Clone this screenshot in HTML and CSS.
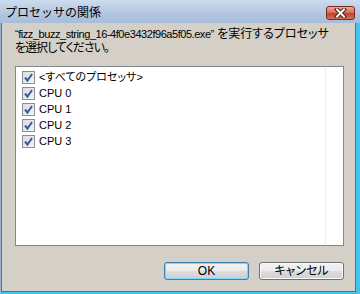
FILE: index.html
```html
<!DOCTYPE html>
<html lang="ja">
<head>
<meta charset="utf-8">
<link rel="stylesheet" href="styles.css">
</head>
<body>
<div class="window">
  <div class="titlebar">
    <span class="title">プロセッサの関係</span>
    <span class="close"><svg width="15" height="10" viewBox="0 0 15 10"><path d="M4 1.5 L11 8.5 M11 1.5 L4 8.5" stroke="#4a1d14" stroke-width="4" stroke-linecap="square"/><path d="M4 1.5 L11 8.5 M11 1.5 L4 8.5" stroke="#fff" stroke-width="2" stroke-linecap="square"/></svg></span>
  </div>
  <div class="body">
    <p class="msg"><span class="fname">“fizz_buzz_string_16-4f0e3432f96a5f05.exe”</span> を実行するプロセッサ<br><span class="tight">を選択してください。</span></p>
    <div class="list">
      <div class="col">
        <div class="item"><span class="cb"><svg width="11" height="11" viewBox="0 0 11 11"><path d="M2 5.5 L4.5 8.5 L9 2" fill="none" stroke="#3d54a0" stroke-width="2"/></svg></span><span>&lt;すべてのプロセッサ&gt;</span></div>
        <div class="item"><span class="cb"><svg width="11" height="11" viewBox="0 0 11 11"><path d="M2 5.5 L4.5 8.5 L9 2" fill="none" stroke="#3d54a0" stroke-width="2"/></svg></span><span>CPU 0</span></div>
        <div class="item"><span class="cb"><svg width="11" height="11" viewBox="0 0 11 11"><path d="M2 5.5 L4.5 8.5 L9 2" fill="none" stroke="#3d54a0" stroke-width="2"/></svg></span><span>CPU 1</span></div>
        <div class="item"><span class="cb"><svg width="11" height="11" viewBox="0 0 11 11"><path d="M2 5.5 L4.5 8.5 L9 2" fill="none" stroke="#3d54a0" stroke-width="2"/></svg></span><span>CPU 2</span></div>
        <div class="item"><span class="cb"><svg width="11" height="11" viewBox="0 0 11 11"><path d="M2 5.5 L4.5 8.5 L9 2" fill="none" stroke="#3d54a0" stroke-width="2"/></svg></span><span>CPU 3</span></div>
      </div>
    </div>
    <div class="buttons">
      <button class="btn default">OK</button>
      <button class="btn">キャンセル</button>
    </div>
  </div>
</div>
</body>
</html>
```

FILE: styles.css
```css
html, body {
  margin: 0;
  padding: 0;
}
body {
  width: 360px;
  height: 294px;
  overflow: hidden;
  font-family: "Liberation Sans", "Noto Sans CJK JP", sans-serif;
  font-size: 12px;
  color: #000;
  background: #d4d0c8;
}
.window {
  box-sizing: border-box;
  width: 360px;
  height: 294px;
  display: flex;
  flex-direction: column;
  border-left: 1px solid #9ab4d2;
  border-right: 4px solid #3ec6ee;
  border-bottom: 2px solid #3ec6ee;
  box-shadow: inset 1px 0 0 #5d6d83, inset -1px 0 0 #5d6d83, inset 0 -1px 0 #5d6d83;
  background: #d4d0c8;
}
.titlebar {
  height: 23px;
  flex: none;
  display: flex;
  align-items: center;
  justify-content: space-between;
  background: linear-gradient(#cddcef, #b2c6e0 60%, #a7bdda);
  padding: 0 5px 0 5px;
  margin-left: -1px;
  margin-right: -4px;
}
.title {
  font-family: "Noto Sans CJK JP", sans-serif;
  font-size: 12px;
  line-height: 14px;
  padding-top: 1px;
}
.close {
  width: 27px;
  height: 12px;
  border: 1px solid #7b2a1c;
  border-radius: 3px;
  background: linear-gradient(#eaa99d, #d8705d 45%, #c2432c 55%, #d3735d);
  display: flex;
  align-items: center;
  justify-content: center;
  margin-top: 2px;
}
.close svg { display: block; }
.body {
  flex: 1;
  display: flex;
  flex-direction: column;
  padding: 4px 12px 0 14px;
}
.msg {
  margin: 0;
  line-height: 14px;
  white-space: nowrap;
  font-feature-settings: "palt";
}
.fname {
  font-size: 11px;
  letter-spacing: -0.45px;
}
.tight {
  letter-spacing: -1px;
}
.list {
  margin-top: 11px;
  height: 178px;
  background: #fff;
  border: 1px solid #828790;
  display: flex;
}
.col {
  width: 303px;
  padding: 2px 0 0 6px;
  border-right: 1px solid #eaeef5;
}
.item {
  height: 16px;
  display: flex;
  align-items: center;
  gap: 4px;
  line-height: 16px;
  font-size: 11px;
  font-feature-settings: "palt";
}
.cb {
  box-sizing: border-box;
  width: 13px;
  height: 13px;
  border: 1px solid #8e8f8f;
  background: linear-gradient(135deg, #dcdcdc, #f4f4f4);
  display: flex;
  align-items: center;
  justify-content: center;
}
.cb svg { display: block; }
.buttons {
  margin-top: 16px;
  display: flex;
  justify-content: flex-end;
  gap: 10px;
}
.btn {
  box-sizing: border-box;
  width: 85px;
  height: 18px;
  padding: 0;
  font-family: "Liberation Sans", "Noto Sans CJK JP", sans-serif;
  font-size: 12px;
  line-height: 14px;
  color: #000;
  border: 1px solid #707070;
  border-radius: 3px;
  background: linear-gradient(#f2f2f2, #ebebeb 50%, #dddddd 51%, #cfcfcf);
  box-shadow: inset 0 0 0 1px #fcfcfc;
  font-feature-settings: "palt";
}
.btn.default {
  border-color: #3c7fb1;
  box-shadow: inset 0 0 0 1px #7fd6f7;
}
```
